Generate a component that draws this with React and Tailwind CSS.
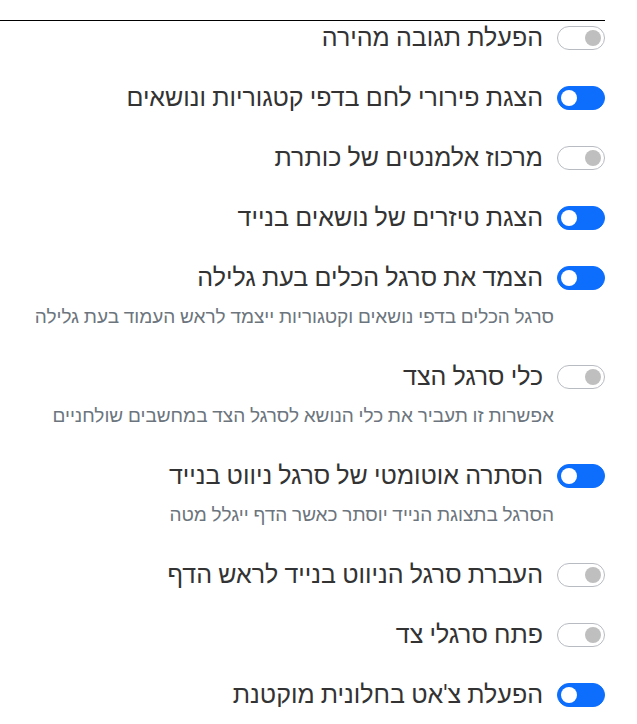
import { useState } from 'react';

const SETTINGS = [
  { id: 'quick-reply', label: 'הפעלת תגובה מהירה', on: false },
  { id: 'breadcrumbs', label: 'הצגת פירורי לחם בדפי קטגוריות ונושאים', on: true },
  { id: 'center-title', label: 'מרכוז אלמנטים של כותרת', on: false },
  { id: 'mobile-teasers', label: 'הצגת טיזרים של נושאים בנייד', on: true },
  {
    id: 'sticky-toolbar',
    label: 'הצמד את סרגל הכלים בעת גלילה',
    hint: 'סרגל הכלים בדפי נושאים וקטגוריות ייצמד לראש העמוד בעת גלילה',
    on: true,
  },
  {
    id: 'sidebar-tools',
    label: 'כלי סרגל הצד',
    hint: 'אפשרות זו תעביר את כלי הנושא לסרגל הצד במחשבים שולחניים',
    on: false,
  },
  {
    id: 'autohide-mobile-nav',
    label: 'הסתרה אוטומטי של סרגל ניווט בנייד',
    hint: 'הסרגל בתצוגת הנייד יוסתר כאשר הדף ייגלל מטה',
    on: true,
  },
  { id: 'mobile-nav-top', label: 'העברת סרגל הניווט בנייד לראש הדף', on: false },
  { id: 'open-sidebars', label: 'פתח סרגלי צד', on: false },
  { id: 'minimized-chat', label: 'הפעלת צ\'אט בחלונית מוקטנת', on: true },
];

function Switch({ checked, onChange }) {
  return (
    <button
      type="button"
      role="switch"
      aria-checked={checked}
      onClick={onChange}
      className={
        checked
          ? 'relative h-[24px] w-[48px] shrink-0 rounded-full border border-[#0d6efd] bg-[#0d6efd]'
          : 'relative h-[24px] w-[48px] shrink-0 rounded-full border border-[#b8bcc2] bg-white'
      }
    >
      <span
        className={
          checked
            ? 'absolute top-[3px] left-[3px] h-[16px] w-[16px] rounded-full bg-white'
            : 'absolute top-[3px] right-[3px] h-[16px] w-[16px] rounded-full bg-[#bfbfbf]'
        }
      />
    </button>
  );
}

export default function App() {
  const [values, setValues] = useState(() =>
    Object.fromEntries(SETTINGS.map((s) => [s.id, s.on]))
  );

  return (
    <div
      dir="rtl"
      className="w-[605px] mt-[20px] border-t border-black bg-white text-[#333]"
      style={{ fontFamily: 'Roboto, sans-serif' }}
    >
      <div className="flex flex-col gap-[36px] pt-[5px]">
        {SETTINGS.map((s) => (
          <div key={s.id}>
            <label className="flex items-center gap-[14px] h-[24px]">
              <Switch
                checked={values[s.id]}
                onChange={() => setValues((v) => ({ ...v, [s.id]: !v[s.id] }))}
              />
              <span className="text-[25px] leading-[24px]">{s.label}</span>
            </label>
            {s.hint && (
              <p className="mt-[15px] mr-[51px] whitespace-nowrap text-[19px] leading-[24px] text-[#6c757d]">
                {s.hint}
              </p>
            )}
          </div>
        ))}
      </div>
    </div>
  );
}
